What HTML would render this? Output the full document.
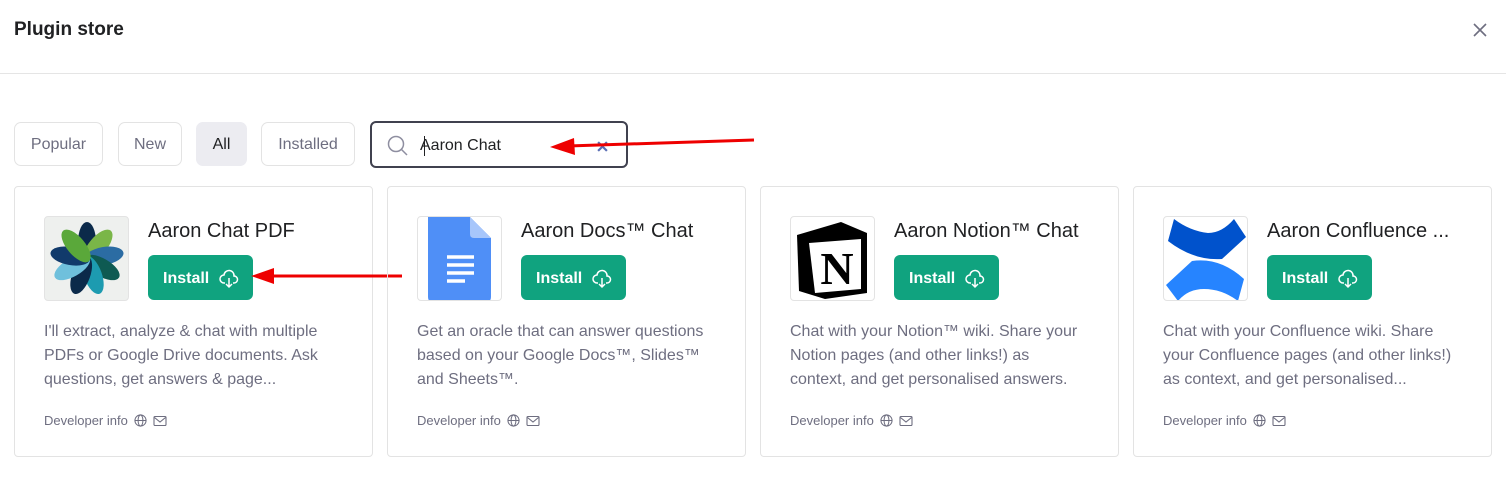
<!DOCTYPE html>
<html><head><style>
*{box-sizing:border-box;margin:0;padding:0}
body{width:1506px;height:482px;background:#fff;font-family:"Liberation Sans",sans-serif;position:relative;overflow:hidden;color:#202123}
.abs{position:absolute}
.hdr{left:14px;top:19px;font-size:19px;font-weight:600;color:#202123}
.line{left:0;top:73px;width:1506px;height:1px;background:#e5e5e5}
.tab{top:122px;height:44px;padding-top:2px;border:1px solid #e3e3e3;border-radius:7px;font-size:16px;color:#6e6e80;display:flex;align-items:center;justify-content:center}
.search{left:370px;top:121px;width:258px;height:47px;border:2px solid #40414f;border-radius:6px}
.card{top:186px;width:359px;height:271px;border:1px solid #e3e3e3;border-radius:4px}
.ic{left:29px;top:29px;width:85px;height:85px;border:1px solid #e3e3e3;border-radius:4px;overflow:hidden;background:#fff}
.ti{left:133px;top:33px;font-size:20px;color:#202123;white-space:nowrap}
.btn{left:133px;top:68px;width:105px;height:45px;padding-top:2px;background:#10a37f;border-radius:6px;color:#fff;font-weight:bold;font-size:16px;display:flex;align-items:center;padding-left:15px;gap:10px}
.ds{left:29px;top:133px;font-size:16px;line-height:24px;color:#6e6e80;white-space:nowrap}
.dv{left:29px;top:226px;font-size:13px;color:#6e6e80;display:flex;align-items:center;gap:6px}
</style></head><body>
<div class="abs hdr">Plugin store</div>
<svg class="abs" style="left:1472px;top:22px" width="16" height="16" viewBox="0 0 16 16"><path d="M2 2L14 14M14 2L2 14" stroke="#6e6e80" stroke-width="1.6"/></svg>
<div class="abs line"></div>
<div class="abs tab" style="left:14px;width:89px">Popular</div>
<div class="abs tab" style="left:118px;width:64px">New</div>
<div class="abs tab" style="left:196px;width:51px;background:#ececf1;border-color:#ececf1;color:#202123">All</div>
<div class="abs tab" style="left:261px;width:94px">Installed</div>
<div class="abs search">
<svg class="abs" style="left:15px;top:12px" width="22" height="22" viewBox="0 0 22 22"><circle cx="9" cy="9" r="7.5" fill="none" stroke="#8e8ea0" stroke-width="1.5"/><path d="M14.5 14.5L20 20" stroke="#8e8ea0" stroke-width="1.5"/></svg>
<div class="abs" style="left:48px;top:14px;font-size:16px;color:#202123">Aaron Chat</div>
<div class="abs" style="left:52px;top:13px;width:1px;height:20px;background:#202123"></div>
<svg class="abs" style="left:225px;top:18px" width="11" height="11" viewBox="0 0 10 10"><path d="M1 1L9 9M9 1L1 9" stroke="#5b6fb5" stroke-width="2"/></svg>
</div>
<svg class="abs" style="left:548px;top:134px" width="210" height="22"><path d="M20 12L206 6" stroke="#e00" stroke-width="3"/><path d="M2 13L26 4L27 21Z" fill="#e00"/></svg>

<div class="abs card" style="left:14px">
<div class="abs ic" style="background:#eef0ee"><svg width="85" height="85" viewBox="0 0 85 85"><g transform="translate(42 42)">
<ellipse rx="9" ry="20" cy="-17" fill="#0b2a4a" transform="rotate(0)"/><ellipse rx="9" ry="20" cy="-17" fill="#7ab648" transform="rotate(40)"/><ellipse rx="9" ry="20" cy="-17" fill="#2b6ca3" transform="rotate(80)"/><ellipse rx="9" ry="20" cy="-17" fill="#0e5a52" transform="rotate(120)"/><ellipse rx="9" ry="20" cy="-17" fill="#1d9bb0" transform="rotate(160)"/><ellipse rx="9" ry="20" cy="-17" fill="#0b2a4a" transform="rotate(200)"/><ellipse rx="9" ry="20" cy="-17" fill="#6fc0dc" transform="rotate(240)"/><ellipse rx="9" ry="20" cy="-17" fill="#113a6b" transform="rotate(280)"/><ellipse rx="9" ry="20" cy="-17" fill="#5aa83a" transform="rotate(320)"/></g></svg></div>
<div class="abs ti">Aaron Chat PDF</div>
<div class="abs btn">Install <svg width="20" height="20" viewBox="0 0 20 20" fill="none" stroke="#fff" stroke-width="1.5"><path d="M6 14H5a4 4 0 0 1 0-8 5 5 0 0 1 10 1 3.5 3.5 0 0 1 0 7h-1"/><path d="M10 9v9M7 15l3 3 3-3"/></svg></div>
<div class="abs ds">I'll extract, analyze &amp; chat with multiple<br>PDFs or Google Drive documents. Ask<br>questions, get answers &amp; page...</div>
<div class="abs dv">Developer info <svg width="13" height="13" viewBox="0 0 14 14" fill="none" stroke="#6e6e80" stroke-width="1.1"><circle cx="7" cy="7" r="6"/><ellipse cx="7" cy="7" rx="2.6" ry="6"/><path d="M1 7h12"/></svg><svg width="14" height="12" viewBox="0 0 14 12" fill="none" stroke="#6e6e80" stroke-width="1.1"><rect x="1" y="1.5" width="12" height="9" rx="1"/><path d="M1.5 2.5L7 7l5.5-4.5"/></svg></div>
</div>
<svg class="abs" style="left:250px;top:266px" width="155" height="20"><path d="M20 10L152 10" stroke="#e00" stroke-width="3"/><path d="M1 10L24 2L24 18Z" fill="#e00"/></svg>

<div class="abs card" style="left:387px">
<div class="abs ic"><svg width="85" height="85" viewBox="0 0 85 85"><path d="M10 0H52L73 21V80Q73 85 68 85H15Q10 85 10 80Z" fill="#4f8ff7"/><path d="M52 0L73 21H56Q52 21 52 17Z" fill="#a7c6fb"/><path d="M29 40h27M29 48h27M29 56h27M29 64h18" stroke="#fff" stroke-width="3.5"/></svg></div>
<div class="abs ti">Aaron Docs™ Chat</div>
<div class="abs btn">Install <svg width="20" height="20" viewBox="0 0 20 20" fill="none" stroke="#fff" stroke-width="1.5"><path d="M6 14H5a4 4 0 0 1 0-8 5 5 0 0 1 10 1 3.5 3.5 0 0 1 0 7h-1"/><path d="M10 9v9M7 15l3 3 3-3"/></svg></div>
<div class="abs ds">Get an oracle that can answer questions<br>based on your Google Docs™, Slides™<br>and Sheets™.</div>
<div class="abs dv">Developer info <svg width="13" height="13" viewBox="0 0 14 14" fill="none" stroke="#6e6e80" stroke-width="1.1"><circle cx="7" cy="7" r="6"/><ellipse cx="7" cy="7" rx="2.6" ry="6"/><path d="M1 7h12"/></svg><svg width="14" height="12" viewBox="0 0 14 12" fill="none" stroke="#6e6e80" stroke-width="1.1"><rect x="1" y="1.5" width="12" height="9" rx="1"/><path d="M1.5 2.5L7 7l5.5-4.5"/></svg></div>
</div>

<div class="abs card" style="left:760px">
<div class="abs ic"><svg width="85" height="85" viewBox="0 0 85 85"><path d="M6 18L50 5L76 16V76L34 82L8 74Z" fill="#000"/><path d="M18 26L70 22V72L24 76Z" fill="#fff"/><text x="46" y="67" font-family="Liberation Serif" font-weight="bold" font-size="46" text-anchor="middle" fill="#000">N</text></svg></div>
<div class="abs ti">Aaron Notion™ Chat</div>
<div class="abs btn">Install <svg width="20" height="20" viewBox="0 0 20 20" fill="none" stroke="#fff" stroke-width="1.5"><path d="M6 14H5a4 4 0 0 1 0-8 5 5 0 0 1 10 1 3.5 3.5 0 0 1 0 7h-1"/><path d="M10 9v9M7 15l3 3 3-3"/></svg></div>
<div class="abs ds">Chat with your Notion™ wiki. Share your<br>Notion pages (and other links!) as<br>context, and get personalised answers.</div>
<div class="abs dv">Developer info <svg width="13" height="13" viewBox="0 0 14 14" fill="none" stroke="#6e6e80" stroke-width="1.1"><circle cx="7" cy="7" r="6"/><ellipse cx="7" cy="7" rx="2.6" ry="6"/><path d="M1 7h12"/></svg><svg width="14" height="12" viewBox="0 0 14 12" fill="none" stroke="#6e6e80" stroke-width="1.1"><rect x="1" y="1.5" width="12" height="9" rx="1"/><path d="M1.5 2.5L7 7l5.5-4.5"/></svg></div>
</div>

<div class="abs card" style="left:1133px">
<div class="abs ic"><svg width="85" height="85" viewBox="0 0 85 85"><path d="M10 2L4 24Q30 44 58 42L82 20L70 2Q58 16 44 16Q26 14 10 2Z" fill="#0052cc"/><path d="M2 68L14 84Q24 72 40 72Q58 72 74 84L80 62Q56 40 28 44Z" fill="#2684ff"/></svg></div>
<div class="abs ti">Aaron Confluence ...</div>
<div class="abs btn">Install <svg width="20" height="20" viewBox="0 0 20 20" fill="none" stroke="#fff" stroke-width="1.5"><path d="M6 14H5a4 4 0 0 1 0-8 5 5 0 0 1 10 1 3.5 3.5 0 0 1 0 7h-1"/><path d="M10 9v9M7 15l3 3 3-3"/></svg></div>
<div class="abs ds">Chat with your Confluence wiki. Share<br>your Confluence pages (and other links!)<br>as context, and get personalised...</div>
<div class="abs dv">Developer info <svg width="13" height="13" viewBox="0 0 14 14" fill="none" stroke="#6e6e80" stroke-width="1.1"><circle cx="7" cy="7" r="6"/><ellipse cx="7" cy="7" rx="2.6" ry="6"/><path d="M1 7h12"/></svg><svg width="14" height="12" viewBox="0 0 14 12" fill="none" stroke="#6e6e80" stroke-width="1.1"><rect x="1" y="1.5" width="12" height="9" rx="1"/><path d="M1.5 2.5L7 7l5.5-4.5"/></svg></div>
</div>
</body></html>
